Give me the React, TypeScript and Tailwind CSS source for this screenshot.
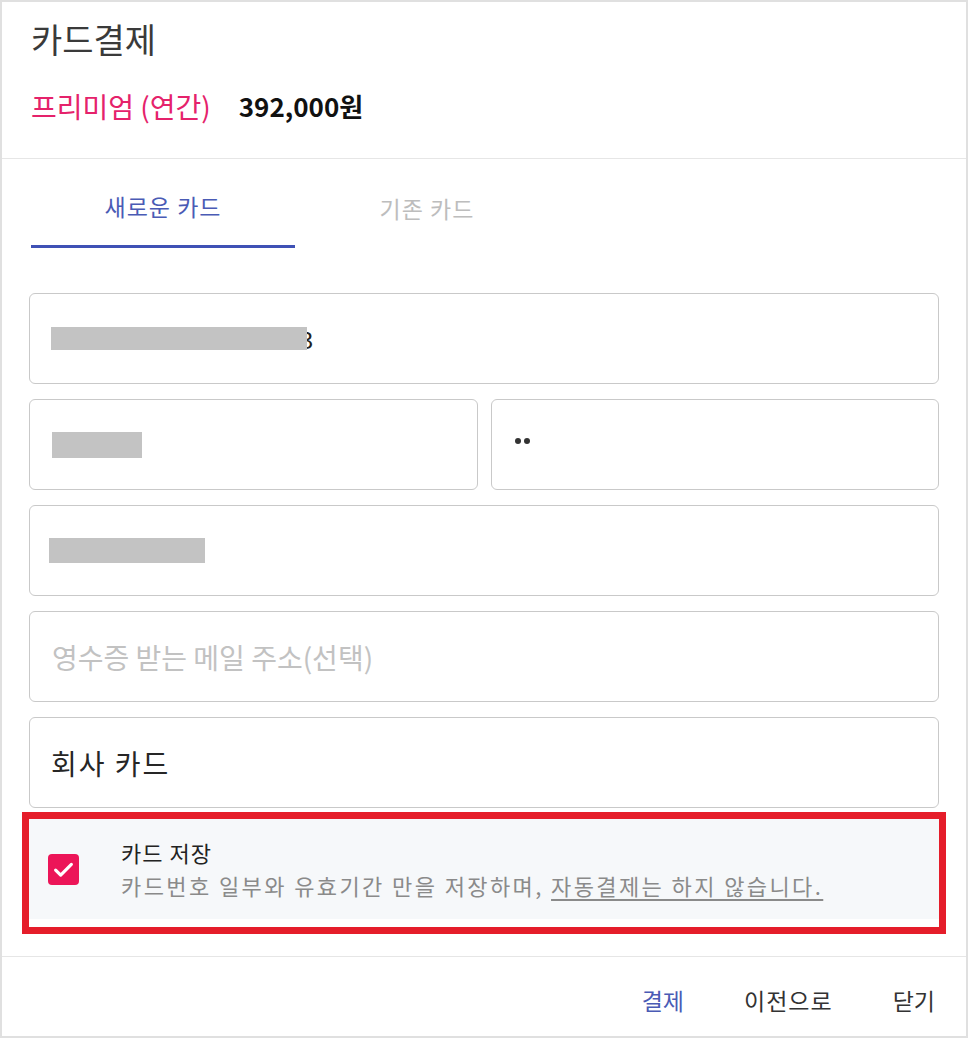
import React from "react";

const font = { fontFamily: '"Noto Sans CJK KR", "Noto Sans", sans-serif' };

function Field({ children, className = "" }: { children?: React.ReactNode; className?: string }) {
  return (
    <div className={`h-[91px] rounded-[6px] border border-[#c9c9c9] bg-white flex items-center pl-[21px] ${className}`}>
      {children}
    </div>
  );
}

export default function App() {
  return (
    <div style={font} className="w-[968px] h-[1038px] bg-white border-2 border-[#e0e0e0] flex flex-col overflow-hidden">
      {/* header */}
      <div className="h-[157px] border-b border-[#e6e6e6] pl-[29px] pt-[13px]">
        <div className="text-[34px] leading-[48px] text-[#3a3a3a]">카드결제</div>
        <div className="mt-[24px] flex items-center leading-[38px]">
          <span className="text-[28px] text-[#e5226b]">프리미엄 (연간)</span>
          <span className="ml-[28px] text-[26px] font-bold text-[#111]">392,000원</span>
        </div>
      </div>

      {/* body */}
      <div className="flex-1 px-[27px]">
        <div className="flex pt-[9px] pl-[2px]">
          <div className="w-[264px] h-[80px] flex flex-col">
            <div className="flex-1 flex items-center justify-center text-[23px] tracking-[1px] text-[#4a5bb5]">새로운 카드</div>
            <div className="h-[3px] bg-[#3f51b5]" />
          </div>
          <div className="w-[264px] h-[80px] flex flex-col">
            <div className="flex-1 flex items-center justify-center text-[23px] tracking-[1px] text-[#bdbdbd]">기존 카드</div>
          </div>
        </div>

        <div className="mt-[45px] flex flex-col gap-[15px]">
          <Field>
            <div className="relative flex items-center">
              <span className="ml-[249px] text-[24px] leading-[30px] text-[#222]">3</span>
              <div className="absolute left-0 top-[3px] w-[256px] h-[23px] bg-[#c3c3c3]" />
            </div>
          </Field>
          <div className="flex gap-[13px]">
            <Field className="flex-1">
              <div className="ml-[1px] w-[90px] h-[26px] bg-[#c3c3c3]" />
            </Field>
            <Field className="flex-1">
              <div className="flex gap-[3px] ml-[2px] -mt-[8px]">
                <span className="w-[6px] h-[6px] rounded-full bg-[#333]" />
                <span className="w-[6px] h-[6px] rounded-full bg-[#333]" />
              </div>
            </Field>
          </div>
          <Field>
            <div className="-ml-[2px] w-[156px] h-[25px] bg-[#c3c3c3]" />
          </Field>
          <Field>
            <span className="text-[28px] text-[#c2c2c2] ml-[1px]">영수증 받는 메일 주소(선택)</span>
          </Field>
          <Field>
            <span className="text-[28px] tracking-[2px] text-[#262626]">회사 카드</span>
          </Field>
        </div>

        {/* save card */}
        <div className="mt-[4px] -mx-[7px] border-[7px] border-[#e51d2a] bg-white pb-[8px]">
          <div className="h-[100px] bg-[#f6f8fa] flex items-center">
            <div className="ml-[19px] w-[31px] h-[31px] rounded-[4px] bg-[#ec1558] flex items-center justify-center">
              <svg width="27" height="27" viewBox="0 0 24 24" fill="none" stroke="white" strokeWidth="2.8" strokeLinecap="round" strokeLinejoin="round">
                <path d="M5 12.5l4.5 4.5L19 7.5" />
              </svg>
            </div>
            <div className="ml-[42px] flex flex-col">
              <div className="text-[22px] leading-[33px] tracking-[1px] text-[#222]">카드 저장</div>
              <div className="text-[22px] leading-[33px] tracking-[2.4px] text-[#8a8a8a]">
                카드번호 일부와 유효기간 만을 저장하며, <span className="underline underline-offset-[4px]">자동결제는 하지 않습니다.</span>
              </div>
            </div>
          </div>
        </div>
      </div>

      {/* footer */}
      <div className="h-[80px] border-t border-[#e6e6e6] flex items-center justify-end gap-[16px] pr-[9px] pt-[8px]">
        <button className="px-[22px] text-[23px] text-[#4a5bb5]">결제</button>
        <button className="px-[22px] text-[23px] tracking-[1px] text-[#333]">이전으로</button>
        <button className="px-[22px] text-[23px] text-[#333]">닫기</button>
      </div>
    </div>
  );
}
